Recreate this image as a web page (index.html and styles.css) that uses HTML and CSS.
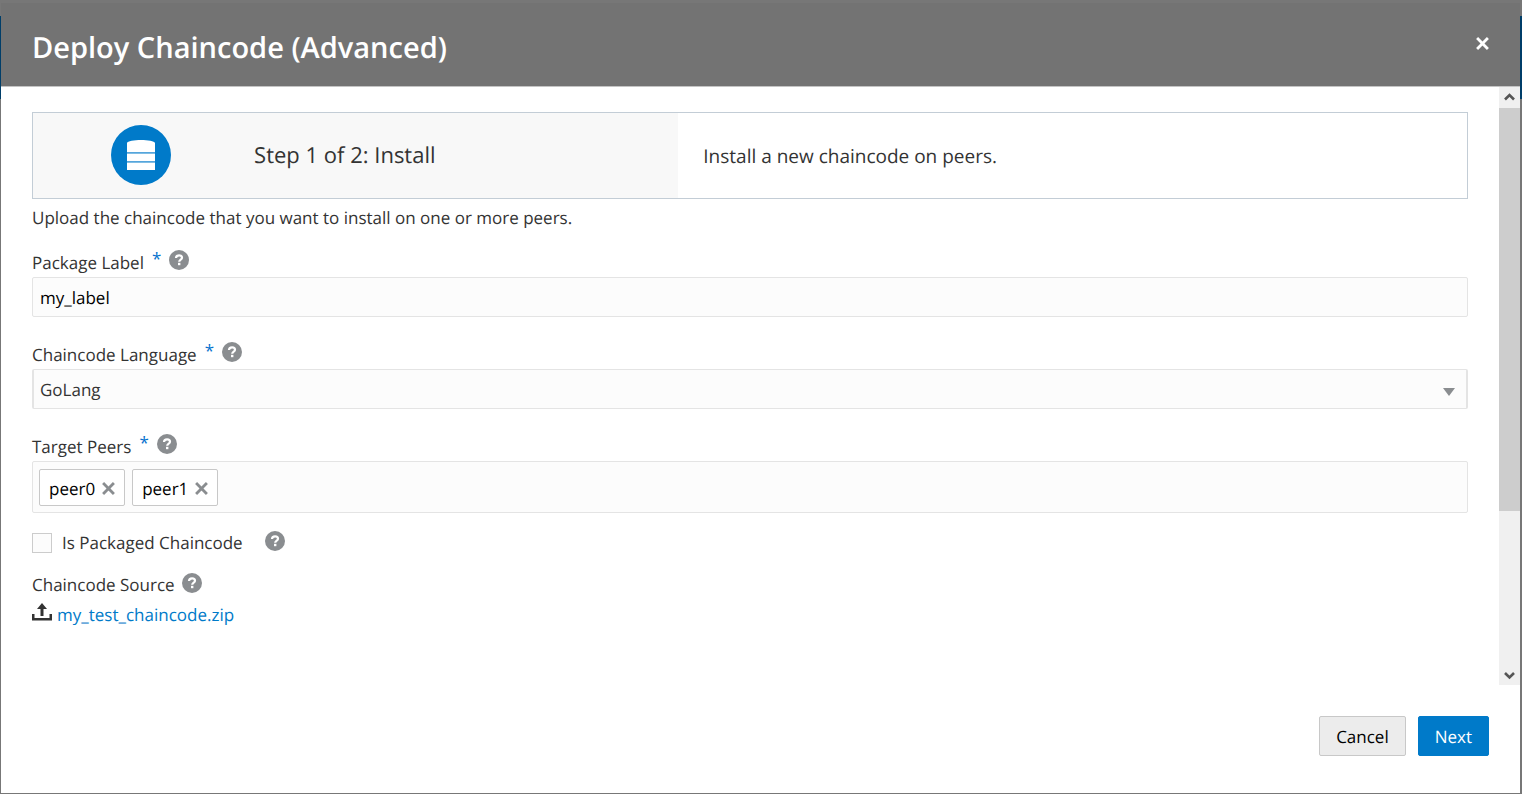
FILE: index.html
```html
<!DOCTYPE html>
<html lang="en">
<head>
<meta charset="utf-8">
<title>Deploy Chaincode (Advanced)</title>
<link rel="stylesheet" href="styles.css">
</head>
<body>
<svg class="sprite" aria-hidden="true">
  <symbol id="help" viewBox="0 0 20 20">
    <circle cx="10" cy="10" r="10" fill="#8a8d90"/>
    <path d="M7 8.1C7 6.200 8.300 5.300 10.100 5.300S13 6.300 13 7.700C13 9.600 10.300 9.500 10.200 11.700" fill="none" stroke="#fff" stroke-width="2.200"/>
    <rect x="9" y="12.800" width="2.400" height="2.400" fill="#fff"/>
  </symbol>
  <symbol id="cross" viewBox="0 0 12 12">
    <path d="M1 1L11 11M11 1L1 11" fill="none" stroke="currentColor" stroke-width="2.600"/>
  </symbol>
</svg>
<div class="page">
<main class="dialog" role="dialog" aria-labelledby="title">
  <header class="header">
    <h1 class="title" id="title">Deploy Chaincode (Advanced)</h1>
    <button class="close" type="button" aria-label="Close"><svg class="close-icon"><use href="#cross"/></svg></button>
  </header>
  <div class="body">
    <form class="content" id="form">
      <section class="step">
        <div class="step-name">
          <svg class="step-icon" viewBox="0 0 60 60" aria-hidden="true">
            <circle cx="30" cy="30" r="30" fill="#007ac9"/>
            <path d="M16 18C17 14 43 14 44 18V27H16ZM16 28.600H44V36H16ZM16 37.500H44V45H16Z" fill="#fff"/>
            <path d="M16 27.500H44M16 36.500H44" stroke="#55a5dc"/>
          </svg>
          <h2 class="step-title">Step 1 of 2: Install</h2>
        </div>
        <p class="step-text">Install a new chaincode on peers.</p>
      </section>
      <p class="intro">Upload the chaincode that you want to install on one or more peers.</p>

      <div class="field">
        <div class="label-row"><label for="label">Package Label</label><span class="required">*</span><button class="help" type="button" aria-label="Help"><svg class="help-icon"><use href="#help"/></svg></button></div>
        <input class="control" id="label" type="text" value="my_label">
      </div>
      <div class="field">
        <div class="label-row"><label for="language">Chaincode Language</label><span class="required">*</span><button class="help" type="button" aria-label="Help"><svg class="help-icon"><use href="#help"/></svg></button></div>
        <div class="select-wrap">
          <select class="control select" id="language"><option>GoLang</option></select>
          <svg class="arrow" viewBox="0 0 12 8" aria-hidden="true"><path d="M0 0H12L6 8Z" fill="#8a8d90"/></svg>
        </div>
      </div>
      <div class="field">
        <div class="label-row"><label for="peers">Target Peers</label><span class="required">*</span><button class="help" type="button" aria-label="Help"><svg class="help-icon"><use href="#help"/></svg></button></div>
        <div class="peers">
          <span class="chip">peer0<button class="remove" type="button" aria-label="Remove peer0"><svg class="remove-icon"><use href="#cross"/></svg></button></span>
          <span class="chip">peer1<button class="remove" type="button" aria-label="Remove peer1"><svg class="remove-icon"><use href="#cross"/></svg></button></span>
          <input class="peer-input" id="peers" type="text">
        </div>
      </div>
      <div class="check-row">
        <input class="check" id="packaged" type="checkbox">
        <label for="packaged">Is Packaged Chaincode</label>
        <button class="help" type="button" aria-label="Help"><svg class="help-icon"><use href="#help"/></svg></button>
      </div>
      <div class="source-row"><span>Chaincode Source</span><button class="help" type="button" aria-label="Help"><svg class="help-icon"><use href="#help"/></svg></button></div>
      <a class="file" href="#form">
        <svg class="upload" viewBox="0 0 20 18" aria-hidden="true"><path d="M0 11H2.500V15H17.500V11H20V17.500H0ZM8.500 13V6H5L10 0L15 6H11.500V13Z" fill="#333"/></svg>
        my_test_chaincode.zip
      </a>
    </form>
    <div class="scrollbar" aria-hidden="true">
      <svg class="scroll-arrow" viewBox="0 0 21 21"><path d="M6 12.500L10.500 8L15 12.500" fill="none" stroke="#555" stroke-width="2.600"/></svg>
      <div class="thumb"></div>
      <div class="track"></div>
      <svg class="scroll-arrow" viewBox="0 0 21 21"><path d="M6 9L10.500 13.500L15 9" fill="none" stroke="#555" stroke-width="2.600"/></svg>
    </div>
  </div>
  <footer class="footer">
    <button class="btn" type="button">Cancel</button>
    <button class="btn primary" type="submit" form="form">Next</button>
  </footer>
</main>
</div>
</body>
</html>
```
FILE: styles.css
```css
* { box-sizing: border-box; }

body {
  margin: 0;
  color: #333;
  background: #777;
  font: 17px/28px "Open Sans", "Noto Sans", sans-serif;
  text-rendering: geometricPrecision;
}

h1, h2, p { margin: 0; font-weight: 400; }
button, input, select { font: inherit; text-rendering: inherit; }
button { cursor: pointer; }
svg { display: block; flex: none; }
.sprite { position: absolute; width: 0; height: 0; }

.page {
  display: flex;
  min-height: 100vh;
  padding: 3px 2px 1px 1px;
  background: linear-gradient(#777 16px, #003e69 16px, #003e69 99px, #777 99px);
}

.dialog {
  flex: 1;
  display: flex;
  flex-direction: column;
  min-width: 0;
  background: #fff;
}

.header {
  display: flex;
  justify-content: space-between;
  padding: 25px 23px 18px 31px;
  background: #737373;
  border-bottom: 1px solid #c4c4c4;
  color: #fff;
}
.title { font-size: 29px; line-height: 40px; font-weight: 600; }
.close { align-self: flex-start; padding: 9px 8px; border: 0; background: none; color: #fff; }
.close-icon { width: 13px; height: 13px; }

.body { flex: 1; display: flex; }
.content { flex: 1; min-width: 0; padding: 25px 31px 0; }

.step {
  display: grid;
  grid-template-columns: 45% 1fr;
  align-items: stretch;
  border: 1px solid #c3cdd6;
}
.step-name {
  display: grid;
  grid-template-columns: 1fr 2fr;
  align-items: center;
  padding: 12px 0 13px;
  background: #f8f8f8;
}
.step-icon { width: 60px; height: 60px; justify-self: center; }
.step-title { padding-left: 6px; font-size: 22px; }
.step-text { align-self: center; padding-left: 25px; font-size: 19px; }

.intro { margin: 5px 0 17px; }

.field { margin-bottom: 24px; }
.label-row, .check-row, .source-row { display: flex; align-items: center; }
.required { margin: 0 8px; padding-bottom: 8px; line-height: 20px; color: #0572ce; }
.help { padding: 0 0 6px; border: 0; background: none; }
.help-icon { width: 20px; height: 20px; }

.control {
  display: block;
  width: 100%;
  height: 40px;
  padding: 0 7px;
  border: 1px solid #e4e4e4;
  border-radius: 2px;
  background: #fcfcfc;
  color: #000;
}
.select-wrap { position: relative; }
.select { appearance: none; padding: 2px 6px 0; border-width: 1px 2px; color: #333; }
.arrow { position: absolute; right: 13px; top: 19px; width: 12px; height: 8px; pointer-events: none; }

.peers {
  display: flex;
  gap: 7px;
  padding: 7px 6px 6px;
  border: 1px solid #e4e4e4;
  border-radius: 2px;
  background: #fcfcfc;
}
.chip {
  display: flex;
  align-items: center;
  gap: 7px;
  padding: 5px 9px 2px;
  border: 1px solid #c8c8c8;
  border-radius: 2px;
  background: #fff;
  color: #000;
}
.remove { padding: 0 0 2px; border: 0; background: none; color: #8a8d90; }
.remove-icon { width: 13px; height: 13px; }
.peer-input { flex: 1; min-width: 0; border: 0; outline: 0; background: none; }

.check-row { margin-top: -8px; }
.check {
  appearance: none;
  width: 20px;
  height: 20px;
  margin: 0 10px 0 0;
  border: 1px solid #ccc;
  background: #fcfcfc;
}
.check-row .help { margin-left: 22px; }
.check-row .help, .source-row .help { padding-bottom: 4px; }
.source-row { gap: 7px; margin-top: 14px; }
.file { display: inline-flex; align-items: center; gap: 5px; margin-top: 2px; color: #007ac9; text-decoration: none; }
.upload { width: 20px; height: 18px; margin-bottom: 6px; }

.scrollbar { display: flex; flex-direction: column; width: 21px; background: #f0f0f0; }
.scroll-arrow { width: 21px; height: 21px; }
.thumb { flex: 403; background: #cdcdcd; }
.track { flex: 153; }

.footer { display: flex; justify-content: flex-end; gap: 12px; padding: 31px 31px 37px; }
.btn {
  padding: 6px 16px 4px;
  border: 1px solid #c8c8c8;
  border-radius: 2px;
  background: #ececec;
  color: #000;
}
.primary { border-color: #007ac9; background: #007ac9; color: #fff; }
```
